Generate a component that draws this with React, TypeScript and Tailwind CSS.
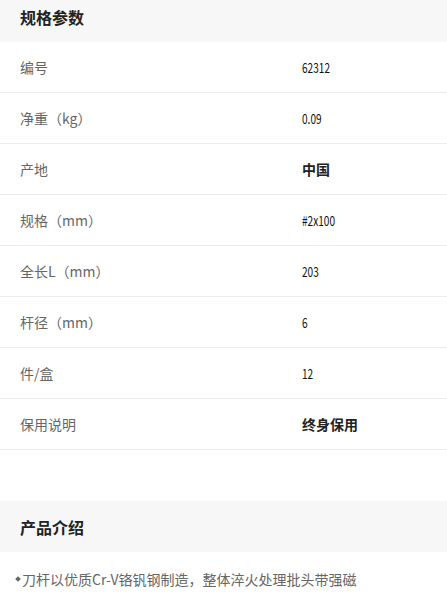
import React from "react";

const rows: { label: string; value: string; bold?: boolean }[] = [
  { label: "编号", value: "62312" },
  { label: "净重（kg）", value: "0.09" },
  { label: "产地", value: "中国", bold: true },
  { label: "规格（mm）", value: "#2x100" },
  { label: "全长L（mm）", value: "203" },
  { label: "杆径（mm）", value: "6" },
  { label: "件/盒", value: "12" },
  { label: "保用说明", value: "终身保用", bold: true },
];

export default function App() {
  return (
    <div
      className="w-[447px] h-[606px] overflow-hidden bg-white"
      style={{ fontFamily: '"Noto Sans CJK SC", "Noto Sans", sans-serif' }}
    >
      <div className="h-[42px] bg-[#f7f7f7] flex items-start pt-[9px] px-5">
        <span className="text-[16px] font-bold text-[#222] leading-none">规格参数</span>
      </div>
      <div>
        {rows.map((r) => (
          <div
            key={r.label}
            className="h-[51px] border-b border-[#ececec] grid grid-cols-[302px_1fr] items-center"
          >
            <span className="pl-5 text-[14px] text-[#666] leading-none">{r.label}</span>
            {r.bold ? (
              <span className="text-[14px] font-bold text-[#222] leading-none">{r.value}</span>
            ) : (
              <span className="text-[14px] text-[#111] leading-none">
                <span className="inline-block origin-left scale-x-[0.72]">{r.value}</span>
              </span>
            )}
          </div>
        ))}
      </div>
      <div className="h-[51px]" />
      <div className="h-[51px] bg-[#f7f7f7] flex items-center px-5">
        <span className="text-[16px] font-bold text-[#222] leading-none">产品介绍</span>
      </div>
      <div className="pt-[20px] pl-4 flex items-center gap-[2px]">
        <span className="w-[4px] h-[4px] bg-[#666] rotate-45 inline-block" />
        <span className="text-[14px] text-[#666] leading-none">
          刀杆以优质Cr-V铬钒钢制造，整体淬火处理批头带强磁
        </span>
      </div>
    </div>
  );
}
